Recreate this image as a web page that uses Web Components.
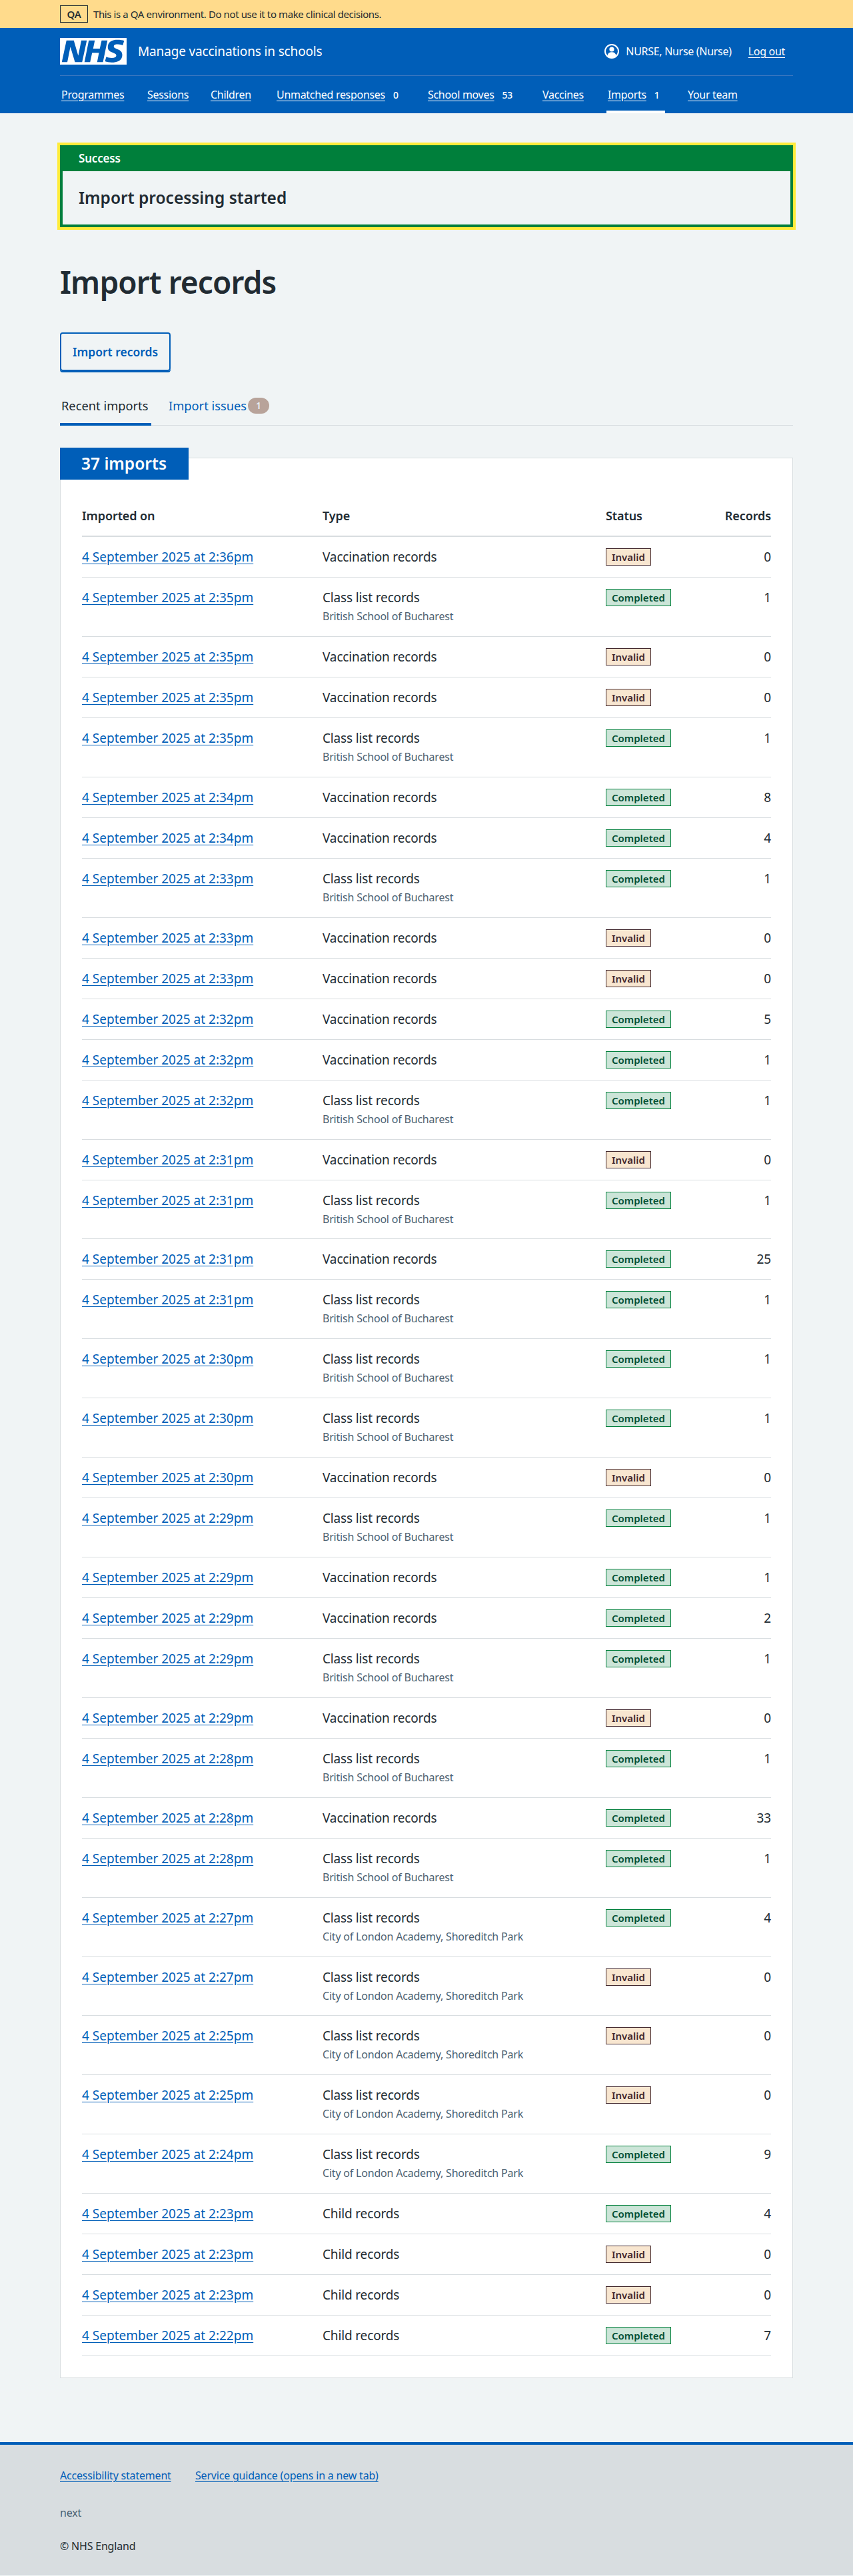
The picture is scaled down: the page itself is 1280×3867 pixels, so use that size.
<!DOCTYPE html>
<html lang="en">
<head>
<meta charset="utf-8">
<title>Imports – Manage vaccinations in schools</title>
<style>
  html, body {
    margin: 0;
    background: #f0f4f5;
    color: #212b32;
    font-family: "Noto Sans", "Open Sans", Arial, sans-serif;
    font-size: 19px;
    line-height: 28px;
    letter-spacing: -0.15px;
  }
</style>
</head>
<body>
<env-bar>This is a QA environment. Do not use it to make clinical decisions.</env-bar>
<app-header></app-header>
<page-main>
  <success-banner title-text="Success">Import processing started</success-banner>
  <page-title>Import records</page-title>
  <secondary-button>Import records</secondary-button>
  <tab-nav></tab-nav>
  <imports-card heading="37 imports"></imports-card>
</page-main>
<app-footer></app-footer>

<script>
const define = (name, html, init) => {
  const template = document.createElement('template');
  template.innerHTML = html;
  customElements.define(name, class extends HTMLElement {
    constructor() {
      super();
      this.attachShadow({ mode: 'open' });
      this.shadowRoot.appendChild(template.content.cloneNode(true));
    }
    connectedCallback() {
      if (init) init(this, this.shadowRoot);
    }
  });
};

define('env-bar', `
  <style>
    :host { display: block; height: 42px; background: #ffdb8c; }
    .inner { display: flex; align-items: center; gap: 8px; height: 42px; margin: 0 90px; font-size: 15px; line-height: 24px; letter-spacing: -0.4px; }
    .tag { box-sizing: border-box; height: 26px; width: 42px; display: flex; align-items: center; justify-content: center; border: 1px solid #212b32; font-weight: 600; letter-spacing: -0.2px; }
  </style>
  <div class="inner"><span class="tag">QA</span><span><slot></slot></span></div>
`);

const navItems = [
  ['Programmes', 97], ['Sessions', 63], ['Children', 67], ['Unmatched responses', 195, '0'],
  ['School moves', 140, '53'], ['Vaccines', 66], ['Imports', 88, '1', true], ['Your team', 81]
];

define('app-header', `
  <style>
    :host { display: block; height: 128px; background: #005eb8; color: #fff; font-size: 16px; line-height: 24px; letter-spacing: -0.3px; }
    .inner { margin: 0 90px; }
    .top { display: flex; align-items: center; height: 71px; border-bottom: 1px solid #3a78bf; }
    .logo { width: 100px; height: 40px; display: block; margin-top: -1px; }
    .service { margin-left: 17px; font-size: 19px; letter-spacing: -0.15px; margin-top: -1px; }
    .account { margin-left: auto; display: flex; align-items: center; margin-right: 12px; margin-top: -1px; }
    .account svg { width: 22px; height: 22px; margin-right: 10px; }
    a { color: #fff; text-decoration: underline; text-underline-offset: 3px; }
    .logout { margin-left: 25px; }
    nav { display: flex; gap: 32px; height: 56px; align-items: flex-start; }
    .item { position: relative; box-sizing: border-box; padding: 0 2px; height: 56px; line-height: 56px; white-space: nowrap; }
    .count { display: inline-block; margin-left: 12px; font-size: 14px; font-weight: 500; }
    .item.active::after { content: ""; position: absolute; left: 0; right: 0; bottom: 0; height: 4px; background: #fff; }
  </style>
  <div class="inner">
    <div class="top">
      <svg class="logo" viewBox="0 0 40 16" role="img" aria-label="NHS" preserveAspectRatio="none">
        <path fill="#fff" d="M0 0h40v16H0z"/>
        <path fill="#005eb8" d="M3.9 1.5h4.4l2.6 9h.1l1.8-9h3.3l-2.8 13H9l-2.7-9h-.1l-1.8 9H1.1M17.3 1.5h3.6l-1 4.9h4L25 1.5h3.5l-2.7 13h-3.5l1.1-5.6h-4.1l-1.2 5.6h-3.4M37.7 4.4c-.7-.3-1.6-.6-2.9-.6-1.4 0-2.5.2-2.5 1.3 0 1.8 5.1 1.2 5.1 5.1 0 3.6-3.3 4.5-6.4 4.5-1.3 0-2.9-.3-4-.7l.8-2.7c.7.4 2.1.7 3.2.7s2.8-.2 2.8-1.5c0-2.1-5.1-1.3-5.1-5 0-3.4 2.9-4.4 5.8-4.4 1.6 0 3.1.2 4 .6"/>
      </svg>
      <span class="service">Manage vaccinations in schools</span>
      <div class="account">
        <svg viewBox="0 0 22 22" aria-hidden="true">
          <circle cx="11" cy="11" r="10" fill="none" stroke="#fff" stroke-width="2"/>
          <circle cx="11" cy="8" r="3.6" fill="#fff"/>
          <path fill="#fff" d="M4.4 17.4c.6-3.4 3.2-5.2 6.6-5.2s6 1.8 6.6 5.2A9 9 0 0 1 11 21a9 9 0 0 1-6.6-3.6z"/>
        </svg>
        <span>NURSE, Nurse (Nurse)</span>
        <a class="logout" href="#">Log out</a>
      </div>
    </div>
    <nav></nav>
  </div>
`, (el, root) => {
  root.querySelector('nav').innerHTML = navItems.map(([label, width, count, active]) => `
    <div class="item${active ? ' active' : ''}" style="width: ${width}px"><a href="#">${label}</a>${count ? `<span class="count">${count}</span>` : ''}</div>
  `).join('');
});

define('page-main', `
  <style>
    :host { display: block; margin: 0 90px; padding-top: 48px; }
  </style>
  <slot></slot>
`);

define('success-banner', `
  <style>
    :host { display: block; border: 4px solid #007f3b; outline: 4px solid #ffeb3b; height: 115px; }
    .title { height: 35px; padding: 0 24px; background: #007f3b; color: #fff; font-size: 17px; font-weight: 600; line-height: 32px; letter-spacing: -0.2px; }
    .body { padding: 0 24px; font-size: 24.5px; font-weight: 600; line-height: 80px; letter-spacing: 0; }
  </style>
  <div class="title"></div>
  <div class="body"><slot></slot></div>
`, (el, root) => {
  root.querySelector('.title').textContent = el.getAttribute('title-text');
});

define('page-title', `
  <style>
    :host { display: block; margin-top: 54px; height: 56px; font-size: 46px; font-weight: 600; line-height: 56px; letter-spacing: -0.9px; }
  </style>
  <slot></slot>
`);

define('secondary-button', `
  <style>
    :host { display: block; margin-top: 48px; height: 60px; }
    button { display: block; box-sizing: border-box; width: 166px; height: 58px; padding: 0; background: transparent; border: 2px solid #005eb8; border-radius: 4px; box-shadow: 0 2px 0 #005eb8; color: #005eb8; font: inherit; font-size: 17.5px; font-weight: 600; letter-spacing: 0; }
  </style>
  <button><slot></slot></button>
`);

define('tab-nav', `
  <style>
    :host { display: block; margin-top: 26px; }
    .tabs { display: flex; height: 54px; border-bottom: 1px solid #d8dde0; box-sizing: border-box; font-size: 18.3px; letter-spacing: 0; }
    .tab { height: 54px; box-sizing: border-box; line-height: 48px; white-space: nowrap; }
    .current { width: 137px; padding-left: 2px; border-bottom: 4px solid #005eb8; }
    .other { margin-left: 26px; color: #005eb8; display: flex; align-items: center; height: 48px; }
    .badge { display: inline-flex; align-items: center; justify-content: center; width: 32px; height: 24px; margin-left: 2px; border-radius: 12px; background: #b8a39a; color: #e8f1f8; font-size: 14px; font-weight: 600; line-height: 24px; }
  </style>
  <div class="tabs">
    <div class="tab current">Recent imports</div>
    <div class="tab other">Import issues<span class="badge">1</span></div>
  </div>
`);

define('status-tag', `
  <style>
    :host { display: block; box-sizing: border-box; height: 26px; margin-top: 1px; padding: 0 8px; border: 1px solid; font-size: 15px; font-weight: 600; line-height: 24px; letter-spacing: 0; white-space: nowrap; }
    :host([kind="Invalid"]) { background: #f8e6d0; border-color: #42282e; color: #42282e; }
    :host([kind="Completed"]) { background: #cce5d8; border-color: #007f3b; color: #004f33; }
  </style>
  <slot></slot>
`);

define('import-row', `
  <style>
    :host { display: grid; grid-template-columns: 361px 425px 1fr auto; padding: 16px 0; border-bottom: 1px solid #d8dde0; align-items: start; }
    a { color: #005eb8; text-decoration: underline; text-underline-offset: 3px; letter-spacing: 0; }
    .school { display: block; margin: 2px 0 1.9px; color: #4c6272; font-size: 16px; line-height: 24px; letter-spacing: -0.2px; }
    .status { display: flex; }
    .records { text-align: right; }
  </style>
  <div><a href="#" class="date"></a></div>
  <div><span class="type"></span><span class="school"></span></div>
  <div class="status"><status-tag></status-tag></div>
  <div class="records"></div>
`, (el, root) => {
  const status = el.getAttribute('status');
  const tag = root.querySelector('status-tag');
  const school = root.querySelector('.school');
  root.querySelector('.date').textContent = `4 September 2025 at ${el.getAttribute('time')}`;
  root.querySelector('.type').textContent = el.getAttribute('type');
  if (el.hasAttribute('school')) school.textContent = el.getAttribute('school');
  else school.remove();
  tag.setAttribute('kind', status);
  tag.textContent = status;
  root.querySelector('.records').textContent = el.getAttribute('records');
});

const BSB = 'British School of Bucharest';
const COL = 'City of London Academy, Shoreditch Park';
const VAC = 'Vaccination records';
const CLS = 'Class list records';
const CHD = 'Child records';
const rows = [
  ['2:36pm', VAC, '', 'Invalid', 0], ['2:35pm', CLS, BSB, 'Completed', 1],
  ['2:35pm', VAC, '', 'Invalid', 0], ['2:35pm', VAC, '', 'Invalid', 0],
  ['2:35pm', CLS, BSB, 'Completed', 1], ['2:34pm', VAC, '', 'Completed', 8],
  ['2:34pm', VAC, '', 'Completed', 4], ['2:33pm', CLS, BSB, 'Completed', 1],
  ['2:33pm', VAC, '', 'Invalid', 0], ['2:33pm', VAC, '', 'Invalid', 0],
  ['2:32pm', VAC, '', 'Completed', 5], ['2:32pm', VAC, '', 'Completed', 1],
  ['2:32pm', CLS, BSB, 'Completed', 1], ['2:31pm', VAC, '', 'Invalid', 0],
  ['2:31pm', CLS, BSB, 'Completed', 1], ['2:31pm', VAC, '', 'Completed', 25],
  ['2:31pm', CLS, BSB, 'Completed', 1], ['2:30pm', CLS, BSB, 'Completed', 1],
  ['2:30pm', CLS, BSB, 'Completed', 1], ['2:30pm', VAC, '', 'Invalid', 0],
  ['2:29pm', CLS, BSB, 'Completed', 1], ['2:29pm', VAC, '', 'Completed', 1],
  ['2:29pm', VAC, '', 'Completed', 2], ['2:29pm', CLS, BSB, 'Completed', 1],
  ['2:29pm', VAC, '', 'Invalid', 0], ['2:28pm', CLS, BSB, 'Completed', 1],
  ['2:28pm', VAC, '', 'Completed', 33], ['2:28pm', CLS, BSB, 'Completed', 1],
  ['2:27pm', CLS, COL, 'Completed', 4], ['2:27pm', CLS, COL, 'Invalid', 0],
  ['2:25pm', CLS, COL, 'Invalid', 0], ['2:25pm', CLS, COL, 'Invalid', 0],
  ['2:24pm', CLS, COL, 'Completed', 9], ['2:23pm', CHD, '', 'Completed', 4],
  ['2:23pm', CHD, '', 'Invalid', 0], ['2:23pm', CHD, '', 'Invalid', 0],
  ['2:22pm', CHD, '', 'Completed', 7]
];

define('imports-card', `
  <style>
    :host { display: block; position: relative; margin-top: 48px; }
    .heading { position: absolute; left: 0; top: -15px; box-sizing: border-box; width: 193px; height: 48px; padding-left: 32px; background: #005eb8; color: #fff; font-size: 24.5px; font-weight: 600; line-height: 48px; letter-spacing: 0; }
    .card { background: #fff; border: 1px solid #d8dde0; padding: 72px 32px 32px; }
    .head { display: grid; grid-template-columns: 361px 425px 1fr auto; padding-bottom: 16px; border-bottom: 2px solid #d8dde0; font-size: 18px; font-weight: 600; line-height: 28px; letter-spacing: -0.1px; }
  </style>
  <div class="heading"></div>
  <div class="card">
    <div class="head"><div>Imported on</div><div>Type</div><div>Status</div><div>Records</div></div>
    <div class="rows"></div>
  </div>
`, (el, root) => {
  root.querySelector('.heading').textContent = el.getAttribute('heading');
  const list = root.querySelector('.rows');
  rows.forEach(([time, type, school, status, records]) => {
    const row = document.createElement('import-row');
    row.setAttribute('time', time);
    row.setAttribute('type', type);
    if (school) row.setAttribute('school', school);
    row.setAttribute('status', status);
    row.setAttribute('records', records);
    list.appendChild(row);
  });
});

define('app-footer', `
  <style>
    :host { display: block; margin-top: 96px; height: 200px; box-sizing: border-box; border-top: 4px solid #005eb8; background: #d8dde0; font-size: 16px; line-height: 24px; letter-spacing: -0.2px; }
    .inner { margin: 0 90px; padding-top: 34px; }
    .links { display: grid; grid-template-columns: 203px auto; justify-content: start; }
    a { color: #005eb8; text-decoration: underline; text-underline-offset: 3px; }
    .version { margin-top: 32px; color: #4c6272; }
    .copy { margin-top: 26px; }
  </style>
  <div class="inner">
    <div class="links"><a href="#">Accessibility statement</a><a href="#">Service guidance (opens in a new tab)</a></div>
    <div class="version">next</div>
    <div class="copy">© NHS England</div>
  </div>
`);
</script>
</body>
</html>
